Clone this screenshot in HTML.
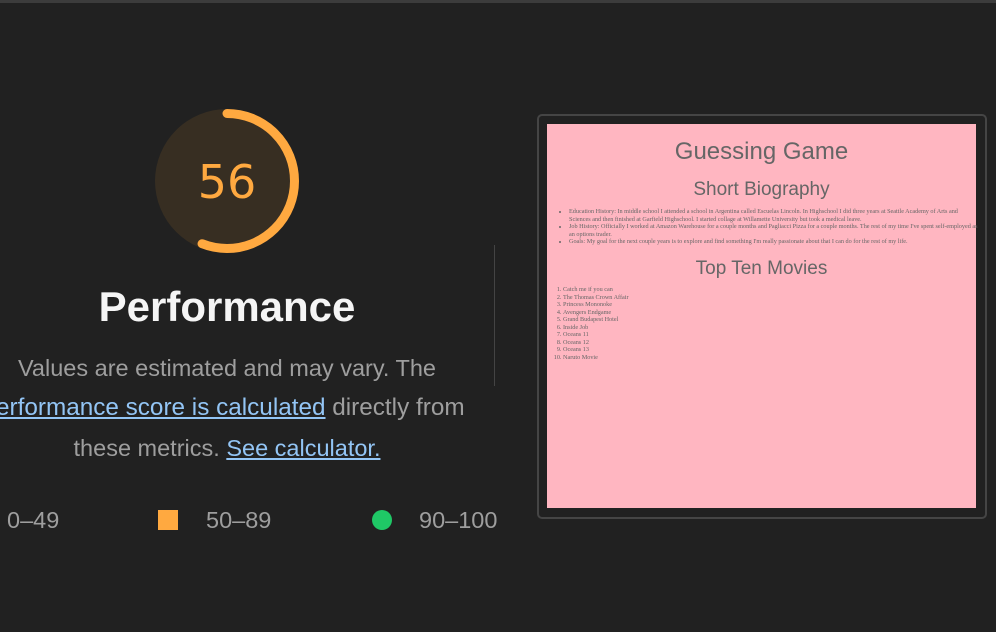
<!DOCTYPE html>
<html><head><meta charset="utf-8"><style>
body{margin:0;width:996px;height:632px;background:#212121;position:relative;overflow:hidden;font-family:"Liberation Sans",Arial,sans-serif}
.topbar{position:absolute;left:0;top:0;width:996px;height:3px;background:#3c3c3c}
.t{position:absolute;white-space:nowrap;color:#9e9e9e;font-size:23.5px;line-height:26px}
.c{left:227px;transform:translateX(-50%)}
a{color:#93c5f5;text-decoration:underline}
.frame{position:absolute;left:537px;top:114px;width:446px;height:401px;border:2px solid #454545;border-radius:5px}
.pink{position:absolute;left:547px;top:124px;width:429px;height:384px;background:#ffb6c1;color:#666;font-family:"Liberation Serif",serif}
.pink h1,.pink h2{font-family:"Liberation Sans",sans-serif;font-weight:normal;text-align:center;margin:0;position:absolute;left:0;width:429px}
.pink ul,.pink ol{position:absolute;margin:0;font-size:6.2px;line-height:7.5px}
</style></head><body>
<div class="topbar"></div>
<svg style="position:absolute;left:150px;top:104px" width="154" height="154" viewBox="0 0 154 154">
<circle cx="77" cy="77" r="72" fill="#372e22"/>
<circle cx="77" cy="77" r="67.5" fill="none" stroke="#ffa940" stroke-width="9" stroke-linecap="round" stroke-dasharray="237.5 500" transform="rotate(-90 77 77)"/>
<text x="77" y="94" text-anchor="middle" font-family="DejaVu Sans, sans-serif" font-size="46" fill="#ffa940">56</text>
</svg>
<div class="t c" style="top:284px;font-size:42px;line-height:46px;color:#f5f5f5;font-weight:bold">Performance</div>
<div class="t c" style="top:355px">Values are estimated and may vary. The</div>
<div class="t" style="left:-4px;top:395px;font-size:24.3px"><a>erformance score is calculated</a> directly from</div>
<div class="t c" style="top:435px">these metrics. <a>See calculator.</a></div>
<div style="position:absolute;left:494px;top:245px;width:1px;height:141px;background:#444"></div>
<div class="t" style="left:7px;top:507px">0–49</div>
<div style="position:absolute;left:158px;top:510px;width:20px;height:20px;background:#ffa940"></div>
<div class="t" style="left:206px;top:507px">50–89</div>
<div style="position:absolute;left:372px;top:510px;width:20px;height:20px;border-radius:50%;background:#1fc866"></div>
<div class="t" style="left:419px;top:507px">90–100</div>
<div class="frame"></div>
<div class="pink">
<h1 style="top:14px;font-size:24px">Guessing Game</h1>
<h2 style="top:55px;font-size:19px">Short Biography</h2>
<ul style="left:10px;top:84px;width:410px;padding-left:12px">
<li>Education History: In middle school I attended a school in Argentina called Escuelas Lincoln. In Highschool I did three years at Seattle Academy of Arts and Sciences and then finished at Garfield Highschool. I started collage at Willamette University but took a medical leave.</li>
<li>Job History: Officially I worked at Amazon Warehouse for a couple months and Pagliacci Pizza for a couple months. The rest of my time I've spent self-employed as an options trader.</li>
<li>Goals: My goal for the next couple years is to explore and find something I'm really passionate about that I can do for the rest of my life.</li>
</ul>
<h2 style="top:134px;font-size:19px">Top Ten Movies</h2>
<ol style="left:4px;top:162px;padding-left:12px">
<li>Catch me if you can</li><li>The Thomas Crown Affair</li><li>Princess Mononoke</li><li>Avengers Endgame</li><li>Grand Budapest Hotel</li><li>Inside Job</li><li>Oceans 11</li><li>Oceans 12</li><li>Oceans 13</li><li>Naruto Movie</li>
</ol>
</div>
</body></html>
